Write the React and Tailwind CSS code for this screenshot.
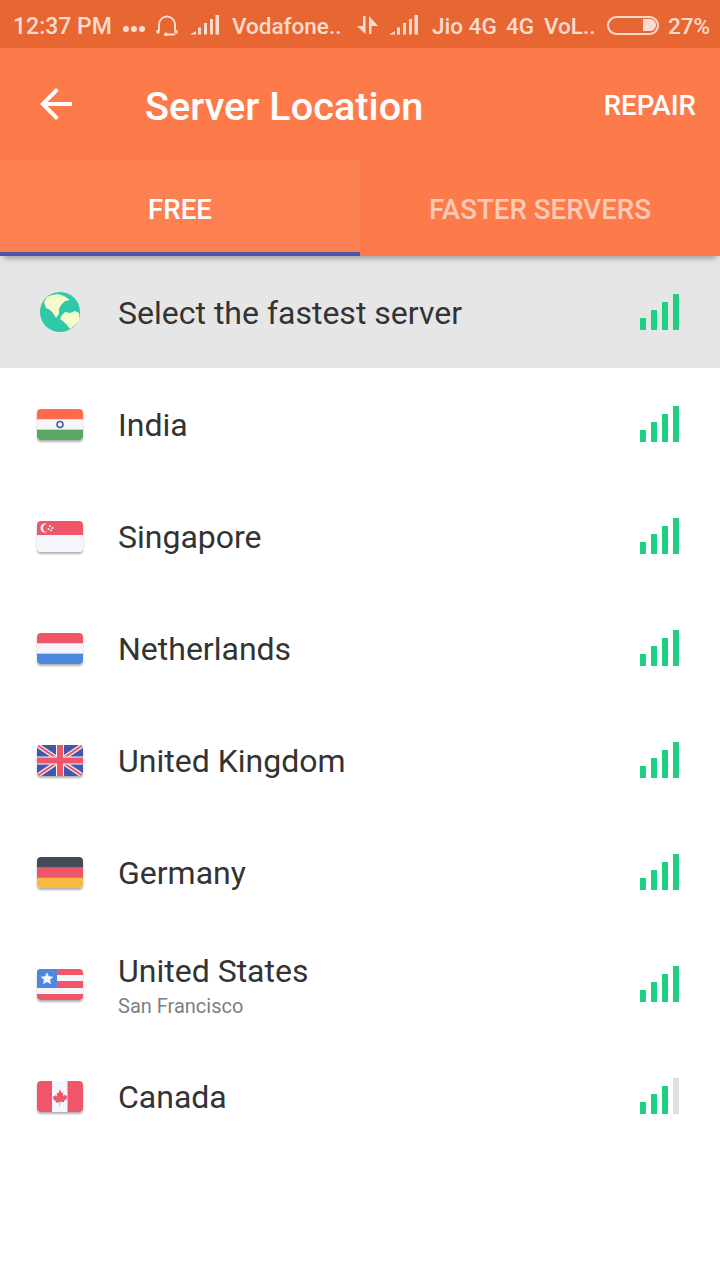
const F = ({ children }) => (
  <div className="w-[46px] h-[31px] rounded-[4px] overflow-hidden shadow-[0_2px_2px_rgba(0,0,0,0.3)] shrink-0 ml-[1px]">
    <svg width="46" height="31" viewBox="0 0 46 31" className="block">{children}</svg>
  </div>
);
const W = "#f5f6fb", R = "#f0566a", B = "#4c88e0", N = "#4557a8";
const Stripes = ({ c }) => c.map((x, i) => <rect key={i} x="0" y={(i * 31) / 3} width="46" height={31 / 3 + 0.5} fill={x} />);

const India = () => (
  <F>
    <Stripes c={["#fd6b4c", W, "#5aa763"]} />
    <circle cx="23" cy="15.5" r="3" fill="none" stroke="#4a5bb0" strokeWidth="1.6" />
  </F>
);
const Singapore = () => (
  <F>
    <rect width="46" height="31" fill={W} />
    <rect width="46" height="14" fill={R} />
    <circle cx="8" cy="7" r="4.5" fill="#fff" />
    <circle cx="10" cy="7" r="4" fill={R} />
    <circle cx="13" cy="5" r="1" fill="#fff" />
    <circle cx="15.5" cy="7" r="1" fill="#fff" />
    <circle cx="11.5" cy="8" r="0.9" fill="#fff" />
    <circle cx="14" cy="9.5" r="0.9" fill="#fff" />
  </F>
);
const Netherlands = () => <F><Stripes c={[R, W, B]} /></F>;
const UK = () => (
  <F>
    <rect width="46" height="31" fill={N} />
    <path d="M0 0L46 31M46 0L0 31" stroke="#f5f6fb" strokeWidth="4.5" />
    <path d="M0 0L46 31M46 0L0 31" stroke={R} strokeWidth="2.2" />
    <rect x="19" width="8" height="31" fill={W} />
    <rect y="11.5" width="46" height="8" fill={W} />
    <rect x="20" width="6" height="31" fill={R} />
    <rect y="12.5" width="46" height="6" fill={R} />
  </F>
);
const Germany = () => <F><Stripes c={["#434c58", R, "#f7b93e"]} /></F>;
const USA = () => (
  <F>
    <rect width="46" height="31" fill={R} />
    <rect y="6" width="46" height="6" fill={W} />
    <rect y="19" width="46" height="6" fill={W} />
    <rect width="20" height="19" fill={B} />
    <path d="M10 3.2l1.900 4.100 4.500.5-3.300 3 .9 4.400-4-2.200-4 2.200.9-4.400-3.300-3 4.500-.5z" fill={W} />
  </F>
);
const Canada = () => (
  <F>
    <rect width="46" height="31" fill={R} />
    <rect x="15" width="15.500" height="31" fill={W} />
    <path d="M22.750 8.500l2 3.500 1.600-.8-.6 4 2-1.800.5 1.300 2-.3-.6 2.200.8.4-3.500 3 .4 1.300-3.700-.5H23V25h-.5v-3.700h-.1l-3.700.5.4-1.300-3.500-3 .8-.4-.6-2.200 2 .3.500-1.300 2 1.800-.6-4 1.600.8z" fill={R} />
  </F>
);
const Globe = () => (
  <svg width="40" height="40" viewBox="0 0 40 40" className="shrink-0 ml-[4px] block">
    <circle cx="20" cy="20" r="20" fill="#2fc9a7" />
    <path d="M4 10L7 5 12 3 18 2 24 4 30 8 25 9 21 13 19 17 19 22 16 26 13 21 10 18 6 16z" fill="#f6fbcb" />
    <path d="M20 27L22 23 25 20 30 21 35 19 39 21 39 28 35 33 30 37 27 33 23 29z" fill="#f6fbcb" />
  </svg>
);

const Bars = ({ weak }) => (
  <div className="flex items-end gap-[5px] h-[36px] w-[39px]">
    <div className="w-[6px] h-[12px] bg-[#1fcf84]" />
    <div className="w-[6px] h-[20px] bg-[#1fcf84]" />
    <div className="w-[6px] h-[28px] bg-[#1fcf84]" />
    <div className={`w-[6px] h-[36px] ${weak ? "bg-[#e0e0e0]" : "bg-[#1fcf84]"}`} />
  </div>
);

const Row = ({ icon, name, sub, weak, active }) => (
  <div className={`h-[112px] flex items-center pl-[36px] pr-[41px] ${active ? "bg-[#e6e6e6]" : "bg-white"}`}>
    <div className="w-[82px] shrink-0 flex items-center">{icon}</div>
    <div className="flex-1 min-w-0 mt-[2px]">
      <div className="text-[32px] leading-[38px] text-[#333333]">{name}</div>
      {sub && <div className="text-[20px] leading-[24px] text-[#808080] mt-[4px]">{sub}</div>}
    </div>
    <Bars weak={weak} />
  </div>
);

const Signal = () => (
  <svg width="30" height="20" viewBox="0 0 30 20" className="block shrink-0">
    <path d="M0 19.500l6-3.500v3.500zM8 19.500v-7h3v7zM14 19.500V8h3v11.500zM20 19.500V4h3v15.500zM25.500 19.500V0H29v19.500z" fill="#fddccf" />
  </svg>
);

export default function App() {
  return (
    <div className="w-[720px] h-[1280px] bg-white overflow-hidden font-['Roboto',sans-serif]">
      <div className="h-[48px] bg-[#e76632] text-[#fddccf] font-medium text-[22.5px] flex items-center pl-[13px] pt-[2px] whitespace-nowrap">
        <span className="w-[110px] shrink-0 mt-[4px] text-[23px]">12:37 PM</span>
        <div className="flex gap-[2px] mt-[8px] shrink-0">
          <span className="w-[6px] h-[6px] rounded-full bg-[#fddccf]" />
          <span className="w-[6px] h-[6px] rounded-full bg-[#fddccf]" />
          <span className="w-[6px] h-[6px] rounded-full bg-[#fddccf]" />
        </div>
        <svg width="22" height="22" viewBox="0 0 22 22" className="ml-[11px] shrink-0" fill="none" stroke="#fddccf" strokeWidth="2">
          <path d="M3 17V10.500a8 8 0 0 1 16 0V17" />
          <path d="M2 16v3.500M20 16v3.500" strokeWidth="3" />
          <path d="M10 20.500h9" />
          <circle cx="10" cy="20.500" r="1" fill="#fddccf" />
        </svg>
        <div className="ml-[12px]"><Signal /></div>
        <span className="ml-[12px] w-[125px] shrink-0 mt-[4px]">Vodafone..</span>
        <svg width="22" height="22" viewBox="0 0 22 22" className="shrink-0" fill="#fddccf">
          <path d="M6 2h2.500v18L0 12h6zM12 20V2l9 10h-6.500v8z" />
        </svg>
        <div className="ml-[10px]"><Signal /></div>
        <span className="ml-[13px] w-[74px] shrink-0 mt-[4px]">Jio 4G</span>
        <span className="w-[38px] shrink-0 mt-[4px]">4G</span>
        <span className="w-[63px] shrink-0 mt-[4px]">VoL..</span>
        <div className="w-[52px] h-[19px] rounded-full border-2 border-[#fddccf] flex justify-end items-center pr-[1px] shrink-0">
          <div className="w-[13px] h-[12px] bg-[#fddccf] rounded-r-full" />
        </div>
        <span className="ml-[9px] shrink-0 mt-[4px]">27%</span>
      </div>

      <div className="h-[112px] bg-[#fd7b4a] flex items-center pl-[32px] pr-[24px] text-white">
        <svg width="48" height="48" viewBox="0 0 24 24" fill="#fff" className="shrink-0">
          <path d="M20 11H7.830l5.590-5.590L12 4l-8 8 8 8 1.410-1.410L7.830 13H20v-2z" />
        </svg>
        <div className="ml-[65px] flex-1 text-[39.700px] font-medium mt-[6px]">Server Location</div>
        <div className="text-[27.700px] font-medium mt-[4px]">REPAIR</div>
      </div>

      <div className="relative z-10 h-[96px] bg-[#fd7b4a] flex shadow-[0_5px_6px_-3px_rgba(0,0,0,0.35)]">
        <div className="w-1/2 bg-[#fd8053] border-b-4 border-[#4a56aa] flex items-center justify-center text-white text-[27.7px] font-medium pt-[8px]">FREE</div>
        <div className="w-1/2 pb-[4px] flex items-center justify-center text-white/60 text-[27.7px] font-medium pt-[8px]">FASTER SERVERS</div>
      </div>

      <Row active icon={<Globe />} name="Select the fastest server" />
      <Row icon={<India />} name="India" />
      <Row icon={<Singapore />} name="Singapore" />
      <Row icon={<Netherlands />} name="Netherlands" />
      <Row icon={<UK />} name="United Kingdom" />
      <Row icon={<Germany />} name="Germany" />
      <Row icon={<USA />} name="United States" sub="San Francisco" />
      <Row icon={<Canada />} name="Canada" weak />
    </div>
  );
}
